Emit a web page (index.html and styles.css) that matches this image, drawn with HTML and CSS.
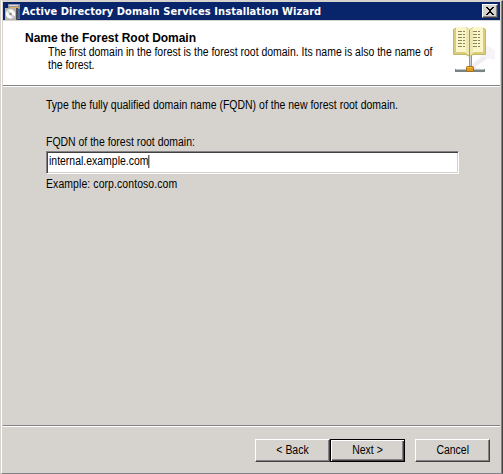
FILE: index.html
```html
<!DOCTYPE html>
<html lang="en">
<head>
<meta charset="utf-8">
<title>Active Directory Domain Services Installation Wizard</title>
<link rel="stylesheet" href="styles.css">
</head>
<body>
<div class="window">
  <div class="titlebar">
    <svg class="app-icon" width="16" height="16" viewBox="0 0 16 16" shape-rendering="crispEdges">
      <path fill="#8f95a5" d="M3 0h12v5H3z"/><path fill="#d8d9df" d="M4 1h9v1H4z"/><path fill="#e0b15c" d="M5 3h9v1H5z"/>
      <path fill="#737b91" d="M10 5h5v10h-5z"/><path fill="#4861a0" d="M13 5h2v9h-2z"/>
      <path fill="#4e4c48" d="M11 4h2v12h-2z"/><path fill="#b5b3ae" d="M0 4h11v12H0z"/>
      <g shape-rendering="auto"><circle cx="5.500" cy="10" r="4.700" fill="#f8f8f6"/><path fill="#bddcb5" d="M5.500 10 2 8l2-2z"/><path fill="#d9b9d9" d="m5.500 10 4 2-2 2z"/><circle cx="5.500" cy="10" r="1.300" fill="#7f897f"/></g>
    </svg>
    <span class="caption">Active Directory Domain Services Installation Wizard</span>
    <button class="close" aria-label="Close"><svg width="10" height="8" viewBox="0 0 10 8" shape-rendering="crispEdges"><path d="M1 0h2v1h1v1h2V1h1V0h2v1H8v1H7v1H6v2h1v1h1v1h1v1H7V7H6V6H4v1H3v1H1V7h1V6h1V5h1V3H3V2H2V1H1z"/></svg></button>
  </div>
  <header class="header">
    <div class="heading">
      <h1>Name the Forest Root Domain</h1>
      <p class="narrow">The first domain in the forest is the forest root domain. Its name is also the name of<br>the forest.</p>
    </div>
    <svg class="book" width="46" height="50" viewBox="0 0 46 50">
      <path fill="#f6f4f8" d="M34 19 43 24v10l-8-2-14 11-3-3 13-12z"/>
      <path fill="#efedf1" d="M21 38 31 31l5 1-13 9 10 3-3 3-9-2z"/>
      <path fill="#8e999b" d="M17 29h3v12h-3z"/><path fill="#c9d0d0" d="M18 29h1v12h-1z"/>
      <path fill="#788184" d="M3 43h30v3H3z"/><path fill="#bdc6c7" d="M4 43h28v1H4z"/>
      <rect x="14.500" y="40.500" width="7" height="5" rx="1" fill="#e39a20" stroke="#a66b14"/>
      <path fill="#f4bb50" d="M15 41h5v1h-5z"/>
      <path fill="#d9cd7c" stroke="#c4b765" d="M1.500 3.500 4 2h11l2.500 2L20 2h11l2.500 1.500v25H21l-3.500 2-3.500-2H1.500z"/>
      <path fill="#faf6c9" d="M4 1h9l4 3v25l-4-3H4z"/><path fill="#faf6c9" d="M31 1h-9l-4 3v25l4-3h9z"/>
      <path fill="#eee7b1" d="m14 2 3 2v25l-3-3zM21 2l-3 2v25l3-3z"/>
      <path fill="#a69b55" d="M17 4h1v26h-1z"/>
      <g stroke="#8a8659" stroke-dasharray="4 1 2 1"><path d="M6 5.500h8M6 8.500h8M6 11.500h8M6 14.500h8M6 17.500h8M6 20.500h8M21 5.500h8M21 8.500h8M21 11.500h8M21 14.500h8M21 17.500h8M21 20.500h8"/></g>
    </svg>
  </header>
  <main class="body">
    <p class="intro narrow">Type the fully qualified domain name (FQDN) of the new forest root domain.</p>
    <label class="label narrow">FQDN of the forest root domain:</label>
    <div class="field"><span class="value narrow">internal.example.com<i class="caret"></i></span></div>
    <p class="example narrow">Example: corp.contoso.com</p>
  </main>
  <footer class="footer">
    <button class="btn back"><span class="narrow">&lt; Back</span></button>
    <button class="btn next"><span class="narrow">Next &gt;</span></button>
    <button class="btn cancel"><span class="narrow">Cancel</span></button>
  </footer>
</div>
</body>
</html>
```
FILE: styles.css
```css
* { box-sizing: border-box; }
body {
  margin: 0;
  overflow: hidden;
  background: #d6d3ce;
  color: #000;
  font: 12px/13px "Liberation Sans", Arial, sans-serif;
  white-space: nowrap;
}
h1, p { margin: 0; }
button { font: inherit; color: inherit; padding: 0; border-radius: 0; }
.narrow { transform: scaleX(.872); transform-origin: left; }
.window {
  width: 502px;
  height: 474px;
  margin-left: 1px;
  display: flex;
  flex-direction: column;
  padding: 1px 1px 0 1px;
  border: 1px solid;
  border-color: #d6d3ce #424142 #848284 #fff;
  box-shadow: inset -1px 0 #848284;
}
.titlebar {
  height: 18px;
  margin-right: 1px;
  display: flex;
  align-items: center;
  background: #08246b;
  color: #fff;
}
.app-icon { margin: 1px 0 0 2px; }
.caption {
  margin: 1px 0 0 1px;
  flex: 1;
  font: bold 11px/17px "DejaVu Sans Condensed", "DejaVu Sans", sans-serif;
  letter-spacing: 0.07px;
}
.close {
  width: 16px;
  height: 14px;
  margin-right: 2px;
  display: grid;
  place-items: center;
  background: #d6d3ce;
  border: 1px solid;
  border-color: #fff #424142 #424142 #fff;
  box-shadow: inset -1px -1px #848284;
}
.header {
  height: 66px;
  margin: 1px 1px 0 0;
  display: flex;
  justify-content: space-between;
  background: #fff;
  border-bottom: 1px solid #fff;
  box-shadow: inset 0 -1px #848284;
}
.heading { width: 440px; padding: 10px 0 0 22px; }
h1 { font-size: 12px; line-height: 14px; letter-spacing: -0.04px; }
.heading p { margin: 1px 0 0 23px; line-height: 13px; }
.book { flex: none; margin: 5px 2px 0 0; }
.body { flex: 1; padding: 11px 42px 0 43px; display: flex; flex-direction: column; }
.intro { line-height: 14px; letter-spacing: 0.02px; }
.label { margin-top: 23px; line-height: 14px; }
.field {
  height: 23px;
  margin-top: 2px;
  padding: 0 0 2px 2px;
  display: flex;
  align-items: center;
  background: #fff;
  border: 1px solid;
  border-color: #848284 #fff #fff #848284;
  box-shadow: inset 1px 1px #424142, inset -1px -1px #d6d3ce;
}
.value { display: flex; }
.caret { width: 1.15px; height: 13px; background: #000; }
.example { margin-top: 3px; line-height: 14px; letter-spacing: 0.1px; }
.footer {
  height: 48px;
  margin-right: 1px;
  padding: 13px 10px 0 0;
  display: flex;
  justify-content: flex-end;
  border-top: 1px solid #848284;
  box-shadow: inset 0 1px #fff;
}
.btn {
  width: 75px;
  height: 23px;
  background: #d6d3ce;
  border: 1px solid;
  border-color: #fff #424142 #424142 #fff;
  box-shadow: inset -1px -1px #848284;
}
.btn .narrow { display: inline-block; transform-origin: center; }
.next { border-color: #000; box-shadow: inset 1px 1px #fff, inset -1px -1px #424142, inset -2px -2px #848284; }
.cancel { margin-left: 10px; }
```
